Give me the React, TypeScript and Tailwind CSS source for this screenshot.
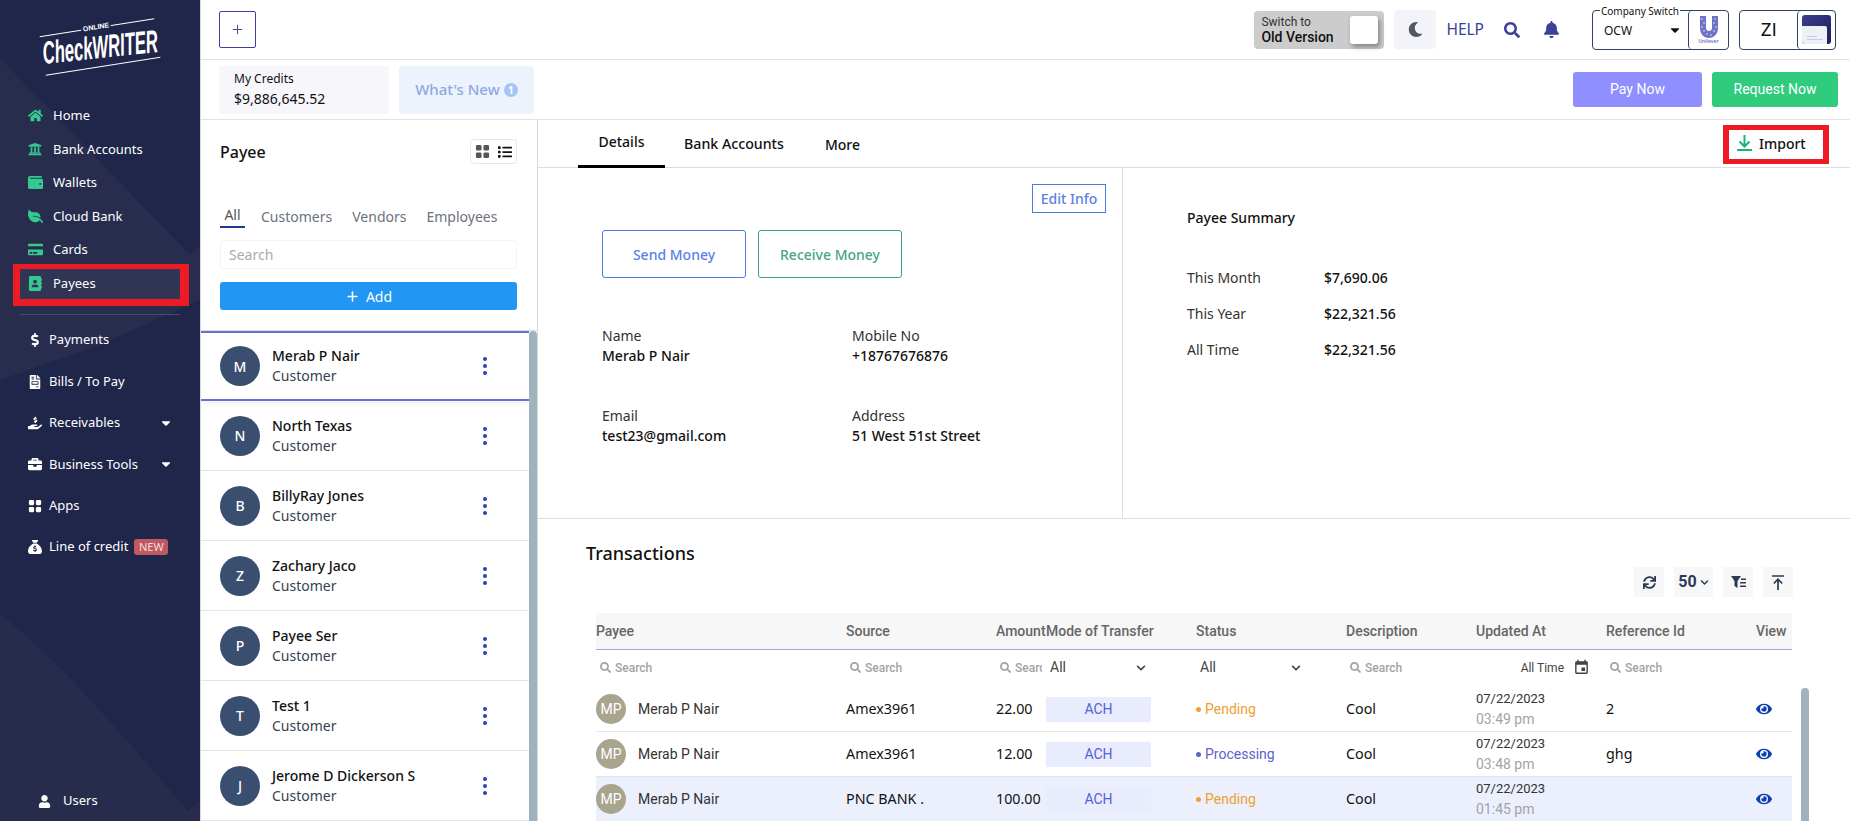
import React from "react";
import { FaHome, FaUniversity, FaWallet, FaLeaf, FaAddressBook, FaDollarSign, FaFileInvoice, FaHandHoldingUsd, FaBriefcase, FaUser, FaCaretDown, FaMoon, FaSearch, FaBell, FaEye, FaSync, FaList, FaChevronDown, FaCreditCard } from "react-icons/fa";
import { FaSackDollar } from "react-icons/fa6";
import { BsFillGridFill } from "react-icons/bs";
import { MdEvent } from "react-icons/md";
import { Plus } from "lucide-react";

const top1 = [
  { t: "Home", I: FaHome, ix: "text-[15px]", ic: "" },
  { t: "Bank Accounts", I: FaUniversity, ix: "text-[14px]", ic: "" },
  { t: "Wallets", I: FaWallet, ix: "text-[15px]", ic: "" },
  { t: "Cloud Bank", I: FaLeaf, ix: "text-[15px]", ic: "-scale-x-100" },
  { t: "Cards", I: FaCreditCard, ix: "text-[15px]", ic: "" },
];
const group2 = [
  { t: "Payments", I: FaDollarSign, caret: false },
  { t: "Bills / To Pay", I: FaFileInvoice, caret: false },
  { t: "Receivables", I: FaHandHoldingUsd, caret: true },
  { t: "Business Tools", I: FaBriefcase, caret: true },
  { t: "Apps", I: BsFillGridFill, caret: false },
];
const payees = [
  ["M", "Merab P Nair"], ["N", "North Texas"], ["B", "BillyRay Jones"], ["Z", "Zachary Jaco"],
  ["P", "Payee Ser"], ["T", "Test 1"], ["J", "Jerome D Dickerson S"],
];
const txns = [
  { src: "Amex3961", amt: "22.00", st: "Pending", date: "03:49 pm", ref: "2", hl: false },
  { src: "Amex3961", amt: "12.00", st: "Processing", date: "03:48 pm", ref: "ghg", hl: false },
  { src: "PNC BANK .", amt: "100.00", st: "Pending", date: "01:45 pm", ref: "", hl: true },
];
const cols = "grid grid-cols-[250px_150px_50px_150px_150px_130px_130px_150px_36px]";

function Dots() {
  return (
    <svg width="6" height="18" viewBox="0 0 6 18" className="text-[#2343b5]" fill="currentColor">
      <circle cx="3" cy="2" r="2" /><circle cx="3" cy="9" r="2" /><circle cx="3" cy="16" r="2" />
    </svg>
  );
}
function FilterSearch({ w }: { w?: string }) {
  return (
    <div className={"flex items-center gap-[4px] pl-[4px] overflow-hidden text-[#a3a3a8] " + (w || "")}>
      <FaSearch className="text-[11px] shrink-0" />
      <span className="text-[12px] font-medium">Search</span>
    </div>
  );
}
function FilterSelect({ w }: { w: string }) {
  return (
    <div className={"flex items-center justify-between pl-[4px] text-[14px] text-[#444] " + w}>
      <span>All</span><FaChevronDown className="text-[10px]" />
    </div>
  );
}

export default function App() {
  return (
    <div className="flex w-[1850px] h-[821px] overflow-hidden bg-white text-[#111] font-['Noto_Sans',sans-serif]">
      {/* Sidebar */}
      <aside className="relative w-[200px] shrink-0 h-full bg-[#20254a] text-[13px] text-white flex flex-col overflow-hidden">
        <svg className="absolute inset-0" width="200" height="821" viewBox="0 0 200 821">
          <path d="M0 58 L190 255 L200 246 L200 300 L100 345 L0 380 Z" fill="#282d4e" />
          <path d="M0 614 C70 670 130 745 188 811 L200 800 L200 821 L0 821 Z" fill="#272c4d" />
        </svg>
        <div className="relative h-[99px] shrink-0 flex items-center justify-center">
          <div className="relative w-[116px] h-[40px] -rotate-[9deg] mt-[-5px] border-y border-white flex items-center justify-center">
            <span className="absolute top-[-6px] left-[42px] bg-[#20254a] px-[2px] text-[7px] leading-[9px] font-bold font-['Liberation_Sans',sans-serif]">ONLINE</span>
            <span className="rotate-[3deg] scale-x-[0.52] whitespace-nowrap text-[32px] leading-[26px] font-bold italic font-['Liberation_Sans',sans-serif]">CheckWRITER</span>
          </div>
        </div>
        <nav className="relative flex flex-col grow">
          {top1.map(({ t, I, ix, ic }) => (
            <div key={t} className="h-[33.5px] shrink-0 flex items-center pl-[28px]">
              <span className={"w-[25px] text-[#35c98f] " + ix}><I className={ic} /></span>
              <span>{t}</span>
            </div>
          ))}
          <div className="relative z-10 -my-[3px] ml-[13px] w-[176px] h-[42px] shrink-0 border-l-[7px] border-r-[9px] border-t-[5px] border-b-[7px] border-[#ed1c24] bg-[#2f3553] flex items-center pl-[8px]">
            <span className="w-[25px] text-[15px] text-[#35c98f]"><FaAddressBook /></span>
            <span>Payees</span>
          </div>
          <div className="mx-[20px] mt-[11px] h-px shrink-0 bg-[#3d4f6b]" />
          <div className="h-[5px] shrink-0" />
          {group2.map(({ t, I, caret }) => (
            <div key={t} className="h-[41.4px] shrink-0 flex items-center pl-[28px] pr-[27px]">
              <span className="w-[21px] text-[14px]"><I /></span>
              <span>{t}</span>
              {caret && <FaCaretDown className="ml-auto text-[14px]" />}
            </div>
          ))}
          <div className="h-[41.4px] shrink-0 flex items-center pl-[28px]">
            <span className="w-[21px] text-[14px]"><FaSackDollar /></span>
            <span>Line of credit</span>
            <span className="ml-[6px] w-[34px] h-[16px] rounded-[3px] bg-[#c0595f] text-[11px] leading-[16px] text-center text-[#f6dede]">NEW</span>
          </div>
          <div className="mt-auto mb-[10px] flex items-center pl-[38px] h-[20px] shrink-0">
            <span className="w-[25px] text-[13px]"><FaUser /></span>
            <span>Users</span>
          </div>
        </nav>
      </aside>

      {/* Main */}
      <div className="flex-1 min-w-0 flex flex-col border-l border-[#d9d9d9]">
        {/* Top bar */}
        <header className="h-[60px] shrink-0 border-b border-[#e2e2e2] flex items-center pl-[18px] pr-[14px]">
          <div className="w-[37px] h-[37px] border border-[#3b41a0] rounded-[2px] flex items-center justify-center text-[#3b41a0]">
            <Plus size={15} strokeWidth={1.5} />
          </div>
          <div className="ml-auto w-[130px] h-[38px] bg-[#cccccc] rounded-[4px] flex items-center justify-between pl-[7px] pr-[6px] font-['Roboto',sans-serif]">
            <div className="flex flex-col">
              <span className="text-[12px] leading-[14px] text-[#333]">Switch to</span>
              <span className="text-[14px] leading-[16px] font-medium text-[#111]">Old Version</span>
            </div>
            <div className="w-[28px] h-[28px] bg-white rounded-[3px] shadow-[2px_3px_5px_rgba(0,0,0,0.35)]" />
          </div>
          <div className="ml-[10px] w-[42px] h-[39px] bg-[#f3f4f9] rounded-[4px] flex items-center justify-center text-[#55565f] text-[15px]"><FaMoon /></div>
          <span className="ml-[10px] text-[15.5px] text-[#3b4199]">HELP</span>
          <FaSearch className="ml-[20px] text-[16px] text-[#3b4199]" />
          <FaBell className="ml-[23px] text-[17px] text-[#3b4199]" />
          <div className="relative ml-[32px] w-[137px] h-[40px] border border-[#2f4560] rounded-[4px] flex items-center">
            <span className="absolute left-[7px] -top-[6px] bg-white px-[1px] text-[10px] leading-[13px] whitespace-nowrap">Company Switch</span>
            <span className="ml-[11px] mt-[3px] text-[12px]">OCW</span>
            <FaCaretDown className="ml-auto mr-[6px] text-[14px]" />
            <div className="w-[40px] h-[38px] border-l border-[#2f4560] rounded-[4px] flex flex-col items-center justify-center">
              <svg width="20" height="22" viewBox="0 0 20 22" fill="#6d74c7">
                <path d="M1 0h6v12c0 2 1.500 3 3 3s3-1 3-3V0h6v12c0 6-4 10-9 10S1 18 1 12z" />
                <g fill="#ffffff">
                  <circle cx="3" cy="3" r=".7" /><circle cx="5" cy="7" r=".7" /><circle cx="3" cy="11" r=".7" /><circle cx="5" cy="15" r=".7" />
                  <circle cx="16" cy="3" r=".7" /><circle cx="15" cy="7" r=".7" /><circle cx="17" cy="11" r=".7" /><circle cx="15" cy="15" r=".7" />
                  <circle cx="8" cy="18" r=".7" /><circle cx="12" cy="19" r=".7" />
                </g>
              </svg>
              <span className="text-[5px] leading-[6px] text-[#6d74c7] font-semibold">Unilever</span>
            </div>
          </div>
          <div className="ml-[10px] w-[97px] h-[40px] border border-[#2f4560] rounded-[4px] flex items-center">
            <span className="w-[58px] text-center text-[18px] leading-none font-['Roboto',sans-serif]">ZI</span>
            <div className="w-[38px] h-[38px] border-l border-[#2f4560] rounded-[4px] flex items-center justify-center">
              <div className="w-[29px] h-[29px] rounded-[3px] bg-[linear-gradient(135deg,#3b3f8f,#1c1f5c)] flex flex-col justify-end overflow-hidden">
                <div className="w-[25px] h-[18px] rounded-tr-[2px] bg-[#eef0f8] flex flex-col justify-end pb-[4px] pl-[5px] gap-[2px]">
                  <div className="w-[10px] h-px bg-[#c5cbe6]" />
                  <div className="w-[16px] h-px bg-[#c5cbe6]" />
                </div>
              </div>
            </div>
          </div>
        </header>

        {/* Second bar */}
        <div className="h-[60px] shrink-0 border-b border-[#e2e2e2] flex items-center pl-[18px] pr-[12px]">
          <div className="w-[170px] h-[48px] bg-[#f6f6fb] rounded-[3px] pl-[15px] flex flex-col justify-center">
            <span className="text-[12px] leading-[18px]">My Credits</span>
            <span className="text-[14px] leading-[22px]">$9,886,645.52</span>
          </div>
          <div className="ml-[10px] w-[135px] h-[48px] bg-[#edf3fd] rounded-[3px] flex items-center justify-center gap-[4px]">
            <span className="text-[15px] font-medium text-[#8ea9de]">What's New</span>
            <span className="w-[14px] h-[14px] rounded-full bg-[#a5c4f5] text-white text-[10px] font-bold leading-[14px] text-center">1</span>
          </div>
          <button className="ml-auto w-[129px] h-[35px] rounded-[3px] bg-[#8f8fff] text-white text-[14px] font-['Roboto',sans-serif]">Pay Now</button>
          <button className="ml-[10px] w-[126px] h-[35px] rounded-[3px] bg-[#2ecc7c] text-white text-[14px] font-['Roboto',sans-serif]">Request Now</button>
        </div>

        <div className="flex-1 min-h-0 flex">
          {/* Payee panel */}
          <section className="w-[337px] shrink-0 border-r border-[#d9d9d9] flex flex-col">
            <div className="h-[211px] shrink-0 border-b border-[#dcdcdc] pl-[19px] pr-[20px] flex flex-col">
              <div className="mt-[19px] h-[25px] flex items-center justify-between">
                <span className="text-[16px] font-medium">Payee</span>
                <div className="w-[47px] h-[25px] border border-[#e8e8e8] rounded-[3px] flex items-center justify-center gap-[8px] text-[#555]">
                  <BsFillGridFill className="text-[15px]" />
                  <FaList className="text-[14px] text-[#111]" />
                </div>
              </div>
              <div className="mt-[41px] flex items-center text-[14px] text-[#6b7280] h-[22px]">
                <span className="w-[25px] text-center text-[#555] border-b-2 border-[#1e3a8a] h-[24px] leading-[21px]">All</span>
                <span className="ml-[16px]">Customers</span>
                <span className="ml-[20px]">Vendors</span>
                <span className="ml-[20px]">Employees</span>
              </div>
              <input readOnly placeholder="Search" className="mt-[13px] h-[29px] w-[297px] shrink-0 border border-[#f4f4f4] rounded-[3px] pl-[8px] text-[14px] placeholder:text-[#aaa] outline-none" />
              <div className="mt-[13px] h-[28px] w-[297px] shrink-0 rounded-[3px] bg-[#2196f3] flex items-center justify-center gap-[6px] text-white text-[14px]">
                <Plus size={15} strokeWidth={2.5} /><span>Add</span>
              </div>
            </div>
            <div className="flex-1 min-h-0 flex overflow-hidden">
              <div className="flex-1 min-w-0">
                {payees.map(([l, n], i) => (
                  <div key={n} className={"flex items-center pl-[19px] " + (i === 0 ? "h-[70px] border-y-2 border-[#6a6fd6] shadow-[0_3px_5px_rgba(0,0,0,0.05)]" : "h-[70px] border-b border-[#e5e5e5]")}>
                    <div className="w-[40px] h-[40px] rounded-full bg-[#3a4f6f] text-white text-[14px] font-medium flex items-center justify-center">{l}</div>
                    <div className="ml-[12px] flex flex-col">
                      <span className="text-[14px] leading-[20px] font-medium">{n}</span>
                      <span className="text-[14px] leading-[20px] text-[#374151]">Customer</span>
                    </div>
                    <div className="ml-auto mr-[41px] flex"><Dots /></div>
                  </div>
                ))}
              </div>
              <div className="w-[8px] bg-[#9fb2bd] rounded-t-[4px]" />
            </div>
          </section>

          {/* Detail */}
          <section className="relative flex-1 min-w-0 flex flex-col">
            <div className="h-[48px] shrink-0 border-b border-[#dedede] flex items-stretch pl-[40px] pr-[21px]">
              <div className="w-[87px] border-b-[3px] border-black -mb-px flex items-center justify-center text-[14px] font-medium pb-[3px]">Details</div>
              <div className="ml-[19px] flex items-center text-[14.2px] font-medium pt-[1px]">Bank Accounts</div>
              <div className="ml-[41px] flex items-center text-[14px] font-medium pt-[1px]">More</div>
              <div className="ml-auto my-[5px] w-[106px] h-[39px] border-y-[5px] border-x-[6px] border-[#ed1c24] flex items-center pl-[8px] gap-[7px] text-[14px] font-medium pb-[3px]">
                <svg width="15" height="16" viewBox="0 0 15 16" fill="none" stroke="#18b47b" strokeWidth="2"><path d="M7.500 0v11M2.500 6.500l5 5 5-5M0 15h15" /></svg>
                <span>Import</span>
              </div>
            </div>
            <div className="h-[351px] shrink-0 border-b border-[#dedede] flex">
              <div className="w-[585px] shrink-0 border-r border-[#dedede] pt-[16px] pl-[64px] pr-[16px]">
                <div className="flex justify-end">
                  <div className="w-[74px] h-[29px] border border-[#4a7be0] flex items-center justify-center text-[14px] font-medium text-[#5a7fe6]">Edit Info</div>
                </div>
                <div className="mt-[17px] flex gap-[12px]">
                  <div className="w-[144px] h-[48px] rounded-[3px] border border-[#4a7be0] flex items-center justify-center text-[14px] font-medium text-[#5a7fe6]">Send Money</div>
                  <div className="w-[144px] h-[48px] rounded-[3px] border border-[#3aa27c] flex items-center justify-center text-[14px] font-medium text-[#48a583]">Receive Money</div>
                </div>
                <div className="mt-[48px] grid grid-cols-[250px_250px] gap-y-[40px] text-[14px] leading-[20px]">
                  <div className="flex flex-col"><span className="text-[#333]">Name</span><span className="font-medium">Merab P Nair</span></div>
                  <div className="flex flex-col"><span className="text-[#333]">Mobile No</span><span className="font-medium">+18767676876</span></div>
                  <div className="flex flex-col"><span className="text-[#333]">Email</span><span className="font-medium">test23@gmail.com</span></div>
                  <div className="flex flex-col"><span className="text-[#333]">Address</span><span className="font-medium">51 West 51st Street</span></div>
                </div>
              </div>
              <div className="flex-1 pt-[40px] pl-[64px] text-[14px]">
                <div className="leading-[20px] font-medium">Payee Summary</div>
                <div className="mt-[31px] grid grid-cols-[137px_150px] auto-rows-[36px] items-center">
                  <span className="text-[#333]">This Month</span><span className="font-medium">$7,690.06</span>
                  <span className="text-[#333]">This Year</span><span className="font-medium">$22,321.56</span>
                  <span className="text-[#333]">All Time</span><span className="font-medium">$22,321.56</span>
                </div>
              </div>
            </div>

            {/* Transactions */}
            <div className="flex-1 min-h-0 overflow-hidden pt-[22px] pl-[48px] pr-[57px]">
              <div className="h-[24px] leading-[24px] text-[18px] font-medium">Transactions</div>
              <div className="mt-[2px] h-[30px] flex justify-end gap-[10px] text-[#2a3a55]">
                <div className="w-[30px] bg-[#f7f7f7] flex items-center justify-center text-[13px]"><FaSync /></div>
                <div className="w-[39px] bg-[#f7f7f7] flex items-center justify-center gap-[3px] font-['Roboto',sans-serif] font-bold text-[16px]">50<FaChevronDown className="text-[9px]" /></div>
                <div className="w-[30px] bg-[#f7f7f7] flex items-center justify-center">
                  <svg width="15" height="13" viewBox="0 0 15 13" fill="#2a3a55"><path d="M0 0h10L6.500 5v7L3.500 10V5z" /><path d="M10 2.500h5v1.500h-5zM9 6h6v1.500H9zM9 9.500h6V11H9z" /></svg>
                </div>
                <div className="w-[30px] bg-[#f7f7f7] flex items-center justify-center">
                  <svg width="14" height="15" viewBox="0 0 14 15" fill="none" stroke="#2a3a55" strokeWidth="1.700"><path d="M1 1h12M7 15V4.500M2.800 8.500L7 4.200l4.200 4.300" /></svg>
                </div>
              </div>
              <div className="mt-[16px] ml-[10px] w-[1196px] font-['Roboto',sans-serif]">
                <div className={cols + " h-[37px] items-center bg-[#f7f7f7] border-b border-[#a3a9dc] text-[14px] font-medium text-[#666]"}>
                  <span>Payee</span><span>Source</span><span>Amount</span><span>Mode of Transfer</span><span>Status</span><span>Description</span><span>Updated At</span><span>Reference Id</span><span>View</span>
                </div>
                <div className={cols + " h-[37px] items-center pb-[2px]"}>
                  <FilterSearch /><FilterSearch /><FilterSearch w="w-[46px]" />
                  <FilterSelect w="w-[100px]" /><FilterSelect w="w-[105px]" />
                  <FilterSearch />
                  <div className="flex items-center justify-end gap-[9px] pr-[16px] text-[12px] text-[#444]"><span>All Time</span><MdEvent className="text-[17px]" /></div>
                  <FilterSearch /><span />
                </div>
                {txns.map((r, i) => (
                  <div key={i} className={cols + " h-[45px] items-center border-b border-[#e5e5e5] " + (r.hl ? "bg-[#ecf0fd]" : "")}>
                    <div className="flex items-center">
                      <div className="w-[30px] h-[30px] rounded-full bg-[#a8a48e] text-white text-[14px] flex items-center justify-center">MP</div>
                      <span className="ml-[12px] text-[14px] text-[#333]">Merab P Nair</span>
                    </div>
                    <span className="text-[14.3px] font-['Noto_Sans',sans-serif]">{r.src}</span>
                    <span className="text-[14.3px] font-['Noto_Sans',sans-serif]">{r.amt}</span>
                    <div className="w-[105px] h-[25px] flex items-center justify-center text-[14px] text-[#5660dd] bg-[#e8ecfc]">ACH</div>
                    <div className={"flex items-center gap-[4px] text-[14px] " + (r.st === "Pending" ? "text-[#f0a030]" : "text-[#5c63c9]")}>
                      <span className={"w-[5px] h-[5px] rounded-full " + (r.st === "Pending" ? "bg-[#f0a030]" : "bg-[#5c63c9]")} />
                      <span>{r.st}</span>
                    </div>
                    <span className="text-[14.3px] font-['Noto_Sans',sans-serif]">Cool</span>
                    <div className="flex flex-col">
                      <span className="text-[13px] leading-[20px] text-[#333]">07/22/2023</span>
                      <span className="text-[14px] leading-[20px] text-[#a3a3a3]">{r.date}</span>
                    </div>
                    <span className="text-[14.3px] font-['Noto_Sans',sans-serif]">{r.ref}</span>
                    <FaEye className="text-[16px] text-[#0b3fb3]" />
                  </div>
                ))}
              </div>
            </div>
            <div className="absolute right-[41px] top-[568px] w-[8px] h-[200px] rounded-t-[4px] bg-[#9fb2bd]" />
          </section>
        </div>
      </div>
    </div>
  );
}
